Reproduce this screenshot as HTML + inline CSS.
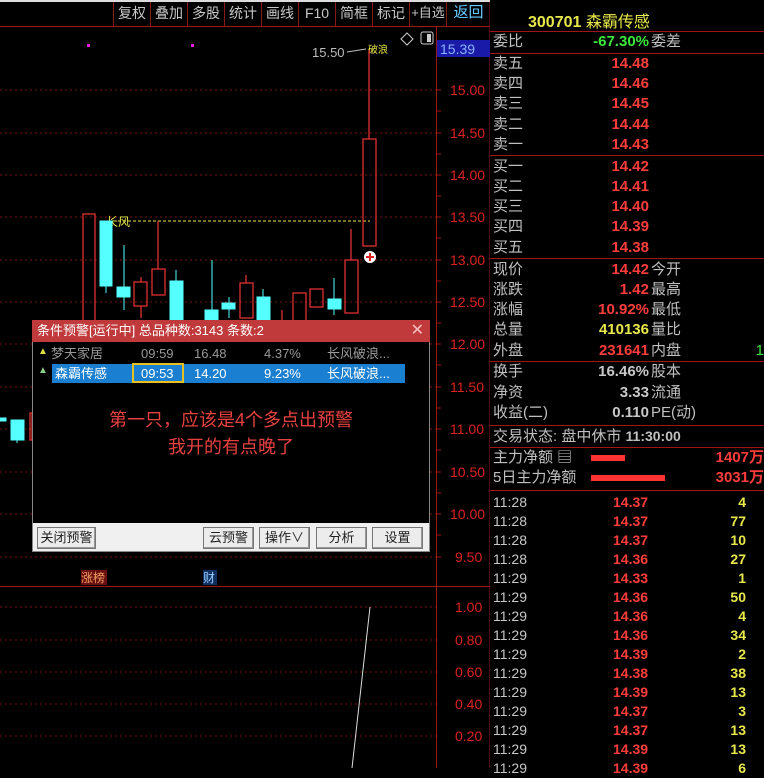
<!DOCTYPE html>
<html><head><meta charset="utf-8"><style>
*{margin:0;padding:0;box-sizing:border-box}
body{width:764px;height:768px;background:#000;overflow:hidden;position:relative;font-family:"Liberation Sans","Noto Sans CJK SC",sans-serif}
.a{position:absolute;white-space:nowrap}
.tb{position:absolute;top:0;height:26px;font-size:14px;color:#c8c8c8;line-height:26px;text-align:center;border-left:1px solid #8a1a1a;white-space:nowrap;overflow:hidden}
.r{position:absolute;left:493px;font-size:15px;color:#c0c0c0;line-height:20px;height:20px;width:271px}
.r .l{position:absolute;left:0}
.r .v{position:absolute;right:115px;font-weight:bold;text-align:right}
.r .m{position:absolute;left:158px}
.red{color:#ff3c3c}.yel{color:#e8e84a}.grn{color:#3ce83c}
.sep{position:absolute;left:490px;width:274px;height:1px;background:#a01515}
.t{position:absolute;left:493px;width:271px;font-size:14px;line-height:19px;height:19px}
.t .l{position:absolute;left:0;color:#c8c8c8}
.t .v{position:absolute;left:120px;color:#ff3c3c;font-weight:bold}
.t .n{position:absolute;right:18px;color:#e8e84a;font-weight:bold}
.btn{position:absolute;top:527px;height:22px;background:#ececec;border:1px solid #777;box-shadow:inset -1px -1px #999;font-size:13px;color:#222;text-align:center;line-height:20px}
</style></head><body>
<svg class="a" style="left:0;top:0" width="490" height="768">
<g stroke="#7a1010" stroke-dasharray="2,3" stroke-width="1">
<line x1="0" y1="90" x2="436" y2="90"/><line x1="0" y1="133" x2="436" y2="133"/><line x1="0" y1="175" x2="436" y2="175"/><line x1="0" y1="217" x2="436" y2="217"/><line x1="0" y1="260" x2="436" y2="260"/><line x1="0" y1="302" x2="436" y2="302"/><line x1="0" y1="344" x2="436" y2="344"/><line x1="0" y1="387" x2="436" y2="387"/><line x1="0" y1="429" x2="436" y2="429"/><line x1="0" y1="472" x2="436" y2="472"/><line x1="0" y1="514" x2="436" y2="514"/><line x1="0" y1="557" x2="436" y2="557"/>
<line x1="0" y1="607" x2="436" y2="607"/><line x1="0" y1="640" x2="436" y2="640"/><line x1="0" y1="672" x2="436" y2="672"/><line x1="0" y1="704" x2="436" y2="704"/><line x1="0" y1="736" x2="436" y2="736"/>
</g>
<line x1="0" y1="26.5" x2="490" y2="26.5" stroke="#a01515"/>
<line x1="436.5" y1="27" x2="436.5" y2="768" stroke="#a01515"/>
<line x1="0" y1="586.5" x2="490" y2="586.5" stroke="#a01515"/>
<line x1="490.5" y1="0" x2="490.5" y2="768" stroke="#a01515" stroke-width="2"/>
<g stroke="#a01515">
<line x1="436" y1="111" x2="441" y2="111"/><line x1="436" y1="154" x2="441" y2="154"/><line x1="436" y1="196" x2="441" y2="196"/><line x1="436" y1="238" x2="441" y2="238"/><line x1="436" y1="281" x2="441" y2="281"/><line x1="436" y1="323" x2="441" y2="323"/><line x1="436" y1="365" x2="441" y2="365"/><line x1="436" y1="408" x2="441" y2="408"/><line x1="436" y1="450" x2="441" y2="450"/><line x1="436" y1="493" x2="441" y2="493"/><line x1="436" y1="535" x2="441" y2="535"/>
<line x1="436" y1="90" x2="441" y2="90"/><line x1="436" y1="133" x2="441" y2="133"/><line x1="436" y1="175" x2="441" y2="175"/><line x1="436" y1="217" x2="441" y2="217"/><line x1="436" y1="260" x2="441" y2="260"/><line x1="436" y1="302" x2="441" y2="302"/><line x1="436" y1="344" x2="441" y2="344"/><line x1="436" y1="387" x2="441" y2="387"/><line x1="436" y1="429" x2="441" y2="429"/><line x1="436" y1="472" x2="441" y2="472"/><line x1="436" y1="514" x2="441" y2="514"/><line x1="436" y1="557" x2="441" y2="557"/>
</g>
<rect x="437" y="40" width="53" height="17" fill="#1a1aa8"/>
<text x="440" y="54" font-size="14" fill="#8ab4ff" font-family="Liberation Sans">15.39</text>
<g font-size="14" fill="#d22" font-family="Liberation Sans">
<text x="450" y="95">15.00</text><text x="450" y="138">14.50</text><text x="450" y="180">14.00</text><text x="450" y="222">13.50</text><text x="450" y="265">13.00</text><text x="450" y="307">12.50</text><text x="450" y="349">12.00</text><text x="450" y="392">11.50</text><text x="450" y="434">11.00</text><text x="450" y="477">10.50</text><text x="450" y="519">10.00</text><text x="455" y="562">9.50</text>
<text x="455" y="612">1.00</text><text x="455" y="645">0.80</text><text x="455" y="677">0.60</text><text x="455" y="709">0.40</text><text x="455" y="741">0.20</text>
</g>
<rect x="87" y="44" width="3" height="3" fill="#e020e0"/><rect x="191" y="44" width="3" height="3" fill="#e020e0"/>
<text x="312" y="57" font-size="13" fill="#bbb" font-family="Liberation Sans">15.50</text>
<line x1="347" y1="52" x2="366" y2="49" stroke="#bbb"/>
<text x="368" y="53" font-size="10" fill="#e8e84a">破浪</text>
<path d="M407 33 l6 6 l-6 6 l-6 -6z" fill="none" stroke="#ccc"/>
<rect x="421" y="32" width="12" height="12" rx="2" fill="none" stroke="#ccc"/><rect x="427" y="34" width="4" height="8" fill="#ccc"/>
<line x1="108" y1="221" x2="370" y2="221" stroke="#e8e84a" stroke-dasharray="3,2"/>
<text x="106" y="226" font-size="12" fill="#e8e84a">长风</text>
<g stroke="#e03030" fill="none" stroke-width="1.3">
<rect x="83" y="214" width="12" height="110"/>
<line x1="141" y1="277" x2="141" y2="282"/><rect x="134" y="282" width="13" height="24"/><line x1="141" y1="306" x2="141" y2="318"/>
<line x1="158" y1="221" x2="158" y2="269"/><rect x="152" y="269" width="13" height="26"/>
<line x1="246" y1="275" x2="246" y2="283"/><rect x="240" y="283" width="13" height="35"/>
<rect x="293" y="293" width="13" height="30"/><line x1="282" y1="310" x2="282" y2="322"/>
<rect x="310" y="289" width="13" height="18"/>
<line x1="351" y1="229" x2="351" y2="260"/><rect x="345" y="260" width="13" height="53"/>
<line x1="369" y1="50" x2="369" y2="139"/><rect x="363" y="139" width="13" height="107"/>
<rect x="30" y="413" width="2" height="27"/>
</g>
<g fill="#5ff" stroke="#5ff">
<rect x="100" y="221" width="12" height="65"/><line x1="106" y1="286" x2="106" y2="293"/>
<line x1="124" y1="245" x2="124" y2="310"/><rect x="117" y="287" width="13" height="10"/>
<line x1="176" y1="270" x2="176" y2="281"/><rect x="170" y="281" width="13" height="40"/>
<line x1="212" y1="260" x2="212" y2="320"/><rect x="205" y="310" width="13" height="10"/>
<line x1="229" y1="297" x2="229" y2="318"/><rect x="222" y="303" width="13" height="6"/>
<line x1="263" y1="289" x2="263" y2="297"/><rect x="257" y="297" width="13" height="23"/>
<line x1="334" y1="278" x2="334" y2="315"/><rect x="328" y="299" width="13" height="10"/>
<rect x="11" y="420" width="13" height="20"/><line x1="17" y1="440" x2="17" y2="443"/>
<rect x="0" y="418" width="6" height="3"/>
</g>
<circle cx="370" cy="257" r="6" fill="#fff"/><path d="M366 257h8M370 253v8" stroke="#e02020" stroke-width="2"/>
<rect x="81" y="570" width="26" height="15" fill="#6a1010"/><text x="81" y="582" font-size="12" fill="#f0a060">涨榜</text>
<rect x="203" y="570" width="14" height="15" fill="#103060"/><text x="203" y="582" font-size="12" fill="#9cf">财</text>
<line x1="370" y1="607" x2="352" y2="768" stroke="#ddd"/>
</svg>
<div class="tb" style="left:113px;width:37px">复权</div>
<div class="tb" style="left:150px;width:37px">叠加</div>
<div class="tb" style="left:187px;width:37px">多股</div>
<div class="tb" style="left:224px;width:37px">统计</div>
<div class="tb" style="left:261px;width:37px">画线</div>
<div class="tb" style="left:298px;width:37px">F10</div>
<div class="tb" style="left:335px;width:37px">简框</div>
<div class="tb" style="left:372px;width:37px">标记</div>
<div class="tb" style="left:409px;width:37px;font-size:13px">+自选</div>
<div class="tb" style="left:446px;width:44px;color:#6cf;font-size:15px">返回</div>
<div class="a" style="left:0;top:0;width:490px;height:2px;background:#ddd"></div>

<div class="a" style="left:528px;top:8px;font-size:16px;color:#e8e84a;font-weight:bold">300701 <span style="font-weight:normal">森霸传感</span></div>
<div class="sep" style="top:31px"></div>
<div class="r" style="top:32px"><span class="l">委比</span><span class="v grn">-67.30%</span><span class="m">委差</span></div>
<div class="sep" style="top:53px"></div>
<div class="r" style="top:54px"><span class="l">卖五</span><span class="v red">14.48</span></div>
<div class="r" style="top:74px"><span class="l">卖四</span><span class="v red">14.46</span></div>
<div class="r" style="top:94px"><span class="l">卖三</span><span class="v red">14.45</span></div>
<div class="r" style="top:115px"><span class="l">卖二</span><span class="v red">14.44</span></div>
<div class="r" style="top:135px"><span class="l">卖一</span><span class="v red">14.43</span></div>
<div class="sep" style="top:155px"></div>
<div class="r" style="top:157px"><span class="l">买一</span><span class="v red">14.42</span></div>
<div class="r" style="top:177px"><span class="l">买二</span><span class="v red">14.41</span></div>
<div class="r" style="top:197px"><span class="l">买三</span><span class="v red">14.40</span></div>
<div class="r" style="top:217px"><span class="l">买四</span><span class="v red">14.39</span></div>
<div class="r" style="top:238px"><span class="l">买五</span><span class="v red">14.38</span></div>
<div class="sep" style="top:258px"></div>
<div class="r" style="top:260px"><span class="l">现价</span><span class="v red">14.42</span><span class="m">今开</span></div>
<div class="r" style="top:280px"><span class="l">涨跌</span><span class="v red">1.42</span><span class="m">最高</span></div>
<div class="r" style="top:300px"><span class="l">涨幅</span><span class="v red">10.92%</span><span class="m">最低</span></div>
<div class="r" style="top:320px"><span class="l">总量</span><span class="v yel">410136</span><span class="m">量比</span></div>
<div class="r" style="top:341px"><span class="l">外盘</span><span class="v red">231641</span><span class="m">内盘</span><span style="position:absolute;right:0;color:#3ce83c">1</span></div>
<div class="sep" style="top:361px"></div>
<div class="r" style="top:362px"><span class="l">换手</span><span class="v" style="color:#c8c8c8">16.46%</span><span class="m">股本</span></div>
<div class="r" style="top:383px"><span class="l">净资</span><span class="v" style="color:#c8c8c8">3.33</span><span class="m">流通</span></div>
<div class="r" style="top:403px"><span class="l">收益(二)</span><span class="v" style="color:#c8c8c8">0.110</span><span class="m">PE(动)</span></div>
<div class="sep" style="top:425px"></div>
<div class="r" style="top:426px"><span class="l">交易状态: 盘中休市 <b style="font-size:14px">11:30:00</b></span></div>
<div class="sep" style="top:447px"></div>
<div class="r" style="top:448px"><span class="l">主力净额 ▤</span><span style="position:absolute;left:98px;top:7px;width:34px;height:6px;background:#f33"></span><span style="position:absolute;right:0;color:#ff3c3c;font-weight:bold">1407万</span></div>
<div class="r" style="top:468px"><span class="l">5日主力净额</span><span style="position:absolute;left:98px;top:7px;width:74px;height:6px;background:#f33"></span><span style="position:absolute;right:0;color:#ff3c3c;font-weight:bold">3031万</span></div>
<div class="sep" style="top:490px"></div>
<div class="t" style="top:493px"><span class="l">11:28</span><span class="v">14.37</span><span class="n">4</span></div>
<div class="t" style="top:512px"><span class="l">11:28</span><span class="v">14.37</span><span class="n">77</span></div>
<div class="t" style="top:531px"><span class="l">11:28</span><span class="v">14.37</span><span class="n">10</span></div>
<div class="t" style="top:550px"><span class="l">11:28</span><span class="v">14.36</span><span class="n">27</span></div>
<div class="t" style="top:569px"><span class="l">11:29</span><span class="v">14.33</span><span class="n">1</span></div>
<div class="t" style="top:588px"><span class="l">11:29</span><span class="v">14.36</span><span class="n">50</span></div>
<div class="t" style="top:607px"><span class="l">11:29</span><span class="v">14.36</span><span class="n">4</span></div>
<div class="t" style="top:626px"><span class="l">11:29</span><span class="v">14.36</span><span class="n">34</span></div>
<div class="t" style="top:645px"><span class="l">11:29</span><span class="v">14.39</span><span class="n">2</span></div>
<div class="t" style="top:664px"><span class="l">11:29</span><span class="v">14.38</span><span class="n">38</span></div>
<div class="t" style="top:683px"><span class="l">11:29</span><span class="v">14.39</span><span class="n">13</span></div>
<div class="t" style="top:702px"><span class="l">11:29</span><span class="v">14.37</span><span class="n">3</span></div>
<div class="t" style="top:721px"><span class="l">11:29</span><span class="v">14.37</span><span class="n">13</span></div>
<div class="t" style="top:740px"><span class="l">11:29</span><span class="v">14.39</span><span class="n">13</span></div>
<div class="t" style="top:759px"><span class="l">11:29</span><span class="v">14.39</span><span class="n">6</span></div>

<div class="a" style="left:32px;top:320px;width:398px;height:232px;background:#000;border:1px solid #888"></div>
<div class="a" style="left:32px;top:320px;width:398px;height:22px;background:#c0393b;color:#fff;font-size:13px;line-height:22px;padding-left:5px">条件预警[运行中] 总品种数:3143 条数:2<span style="position:absolute;right:6px;font-size:16px;color:#f2c0c0">✕</span></div>
<div class="a" style="left:38px;top:346px;font-size:10px;color:#dd4">▲</div>
<div class="a" style="left:38px;top:365px;font-size:10px;color:#8c8">▲</div>
<div class="a" style="left:51px;top:346px;font-size:13px;color:#999;line-height:16px">梦天家居</div>
<div class="a" style="left:141px;top:346px;font-size:13px;color:#999;line-height:16px">09:59</div>
<div class="a" style="left:194px;top:346px;font-size:13px;color:#999;line-height:16px">16.48</div>
<div class="a" style="left:264px;top:346px;font-size:13px;color:#999;line-height:16px">4.37%</div>
<div class="a" style="left:327px;top:346px;font-size:13px;color:#999;line-height:16px">长风破浪...</div>
<div class="a" style="left:52px;top:364px;width:353px;height:19px;background:#1a7fd0"></div>
<div class="a" style="left:132px;top:363px;width:52px;height:20px;border:2px solid #e8c020"></div>
<div class="a" style="left:55px;top:365px;font-size:13px;color:#fff;line-height:17px">森霸传感</div>
<div class="a" style="left:141px;top:365px;font-size:13px;color:#fff;line-height:17px">09:53</div>
<div class="a" style="left:194px;top:365px;font-size:13px;color:#fff;line-height:17px">14.20</div>
<div class="a" style="left:264px;top:365px;font-size:13px;color:#fff;line-height:17px">9.23%</div>
<div class="a" style="left:327px;top:365px;font-size:13px;color:#fff;line-height:17px">长风破浪...</div>
<div class="a" style="left:32px;top:407px;width:398px;text-align:center;font-size:18px;color:#e84040;line-height:27px">第一只，应该是4个多点出预警<br>我开的有点晚了</div>
<div class="a" style="left:33px;top:523px;width:396px;height:28px;background:#f0f0f0"></div>
<div class="btn" style="left:37px;width:59px">关闭预警</div>
<div class="btn" style="left:203px;width:51px">云预警</div>
<div class="btn" style="left:259px;width:51px">操作∨</div>
<div class="btn" style="left:316px;width:51px">分析</div>
<div class="btn" style="left:372px;width:51px">设置</div>
</body></html>
